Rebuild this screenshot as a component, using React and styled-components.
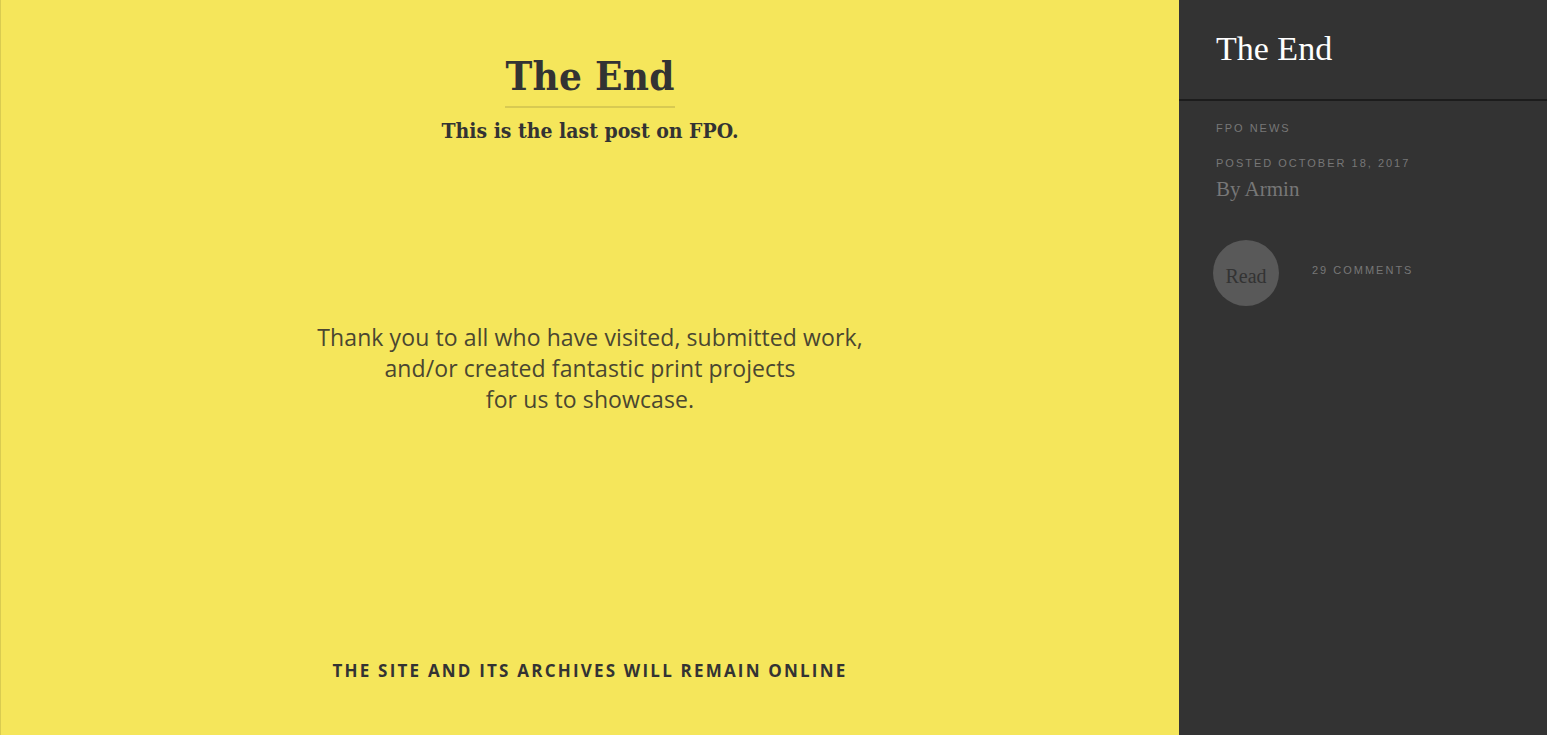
import styled, { createGlobalStyle } from 'styled-components';

const GlobalStyle = createGlobalStyle`
  html, body {
    margin: 0;
    padding: 0;
    height: 100%;
    overflow: hidden;
  }
  #root {
    height: 100%;
  }
`;

//layout
const Page = styled.div`
  display: flex;
  height: 735px;
  width: 1547px;
`;

const Poster = styled.main`
  width: 1179px;
  background: #f5e65b;
  border-left: 1px solid #d9cc50;
  box-sizing: border-box;
  display: flex;
  flex-direction: column;
  align-items: center;
`;

const Title = styled.h1`
  margin: 50px 0 0;
  font-family: 'DejaVu Serif Condensed', 'DejaVu Serif', serif;
  font-weight: bold;
  font-size: 40px;
  line-height: 51px;
  color: #333333;
  padding-bottom: 5px;
  border-bottom: 2px solid #d8ca52;
  letter-spacing: 0.3px;
`;

const Subtitle = styled.p`
  margin: 10px 0 0;
  font-family: 'DejaVu Serif Condensed', 'DejaVu Serif', serif;
  font-weight: bold;
  font-size: 21px;
  line-height: 26px;
  color: #333333;
`;

const Thanks = styled.p`
  margin: 178px 0 0;
  font-family: 'Open Sans', 'Liberation Sans', sans-serif;
  font-weight: 400;
  font-size: 23px;
  line-height: 31px;
  color: #4a4631;
  text-align: center;
  letter-spacing: 0.1px;
`;

const Notice = styled.p`
  margin: auto 0 53px;
  font-family: 'Open Sans', 'Liberation Sans', sans-serif;
  font-weight: 700;
  font-size: 17px;
  letter-spacing: 2.2px;
  color: #333333;
  text-transform: uppercase;
`;

const Sidebar = styled.aside`
  flex: 1;
  background: #333333;
  display: flex;
  flex-direction: column;
`;

const SideHeader = styled.header`
  height: 101px;
  box-sizing: border-box;
  border-bottom: 2px solid #1c1c1c;
  padding: 30px 37px 0;
`;

const SideTitle = styled.h2`
  margin: 0;
  font-family: 'Liberation Serif', serif;
  font-weight: normal;
  font-size: 34px;
  line-height: 38px;
  color: #ffffff;
`;

const Meta = styled.div`
  padding: 21px 37px 0;
`;

const Label = styled.p`
  margin: ${p => p.top || 0}px 0 0;
  font-family: 'Liberation Sans', sans-serif;
  font-size: 11px;
  letter-spacing: 2px;
  color: #777777;
  text-transform: uppercase;
`;

const Author = styled.p`
  margin: 8px 0 0;
  font-family: 'Liberation Serif', serif;
  font-size: 21px;
  color: #777777;
`;

const Actions = styled.div`
  display: flex;
  align-items: center;
  gap: 33px;
  padding: 38px 0 0 34px;
`;

const ReadButton = styled.button`
  width: 66px;
  height: 66px;
  border-radius: 50%;
  border: none;
  background: #595959;
  color: #333333;
  font-family: 'Liberation Serif', serif;
  font-size: 20px;
  padding: 6px 0 0;
  cursor: pointer;
`;

const Comments = styled.a`
  font-family: 'Liberation Sans', sans-serif;
  font-size: 11px;
  letter-spacing: 2px;
  color: #777777;
  text-transform: uppercase;
  text-decoration: none;
  margin-top: -6px;
`;

function App() {
  return (
    <>
      <GlobalStyle />
      <Page>
        <Poster>
          <Title>The End</Title>
          <Subtitle>This is the last post on FPO.</Subtitle>
          <Thanks>
            Thank you to all who have visited, submitted work,
            <br />
            and/or created fantastic print projects
            <br />
            for us to showcase.
          </Thanks>
          <Notice>The site and its archives will remain online</Notice>
        </Poster>
        <Sidebar>
          <SideHeader>
            <SideTitle>The End</SideTitle>
          </SideHeader>
          <Meta>
            <Label>FPO News</Label>
            <Label top={23}>Posted October 18, 2017</Label>
            <Author>By Armin</Author>
          </Meta>
          <Actions>
            <ReadButton>Read</ReadButton>
            <Comments href="#">29 Comments</Comments>
          </Actions>
        </Sidebar>
      </Page>
    </>
  );
}

export default App;
